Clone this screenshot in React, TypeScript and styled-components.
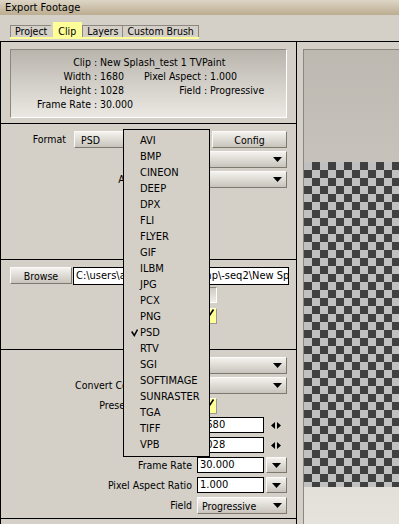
import React from "react";
import styled, { createGlobalStyle, css } from "styled-components";

const GlobalStyle = createGlobalStyle`
  *, *::before, *::after { box-sizing: border-box; }
  html, body { margin: 0; padding: 0; background: #d4d0c8; }
  body {
    font-family: "DejaVu Sans Condensed", "Liberation Sans", Arial, sans-serif;
    font-size: 10.5px;
    color: #000;
  }
`;

const Window = styled.div`
  position: relative;
  width: 399px;
  height: 524px;
  overflow: hidden;
  background: #d4d0c8;
  display: flex;
  flex-direction: column;
`;

const TitleBar = styled.div`
  flex: none;
  height: 15px;
  padding-left: 5px;
  font-size: 11px;
  line-height: 15px;
  background: linear-gradient(#ddd5c6, #bcad90);
`;

const TabStrip = styled.div`
  flex: none;
  height: 26px;
  display: flex;
  align-items: flex-end;
  padding: 0 0 2px 10px;
`;

const TabBar = styled.div`
  display: flex;
  align-items: flex-end;
  border-bottom: 2px solid #ffff99;
`;

const Tab = styled.div<{ $active?: boolean; $last?: boolean }>`
  height: 12px;
  padding: 0 4px;
  line-height: 11px;
  white-space: nowrap;
  border-top: 1px solid #8c8880;
  border-left: 1px solid #8c8880;
  ${(p) =>
    p.$last &&
    css`
      border-right: 1px solid #8c8880;
    `}
  ${(p) =>
    p.$active &&
    css`
      height: 15px;
      padding: 4px 6px 0 5px;
      margin-left: 2px;
      border: none;
      background: #ffff99;
    `}
`;

const Main = styled.div`
  flex: 1;
  min-height: 0;
  display: flex;
  border-top: 1px solid #000;
`;

const LeftColumn = styled.div`
  flex: none;
  width: 297px;
  border-left: 1px solid #000;
  border-right: 1px solid #000;
  display: flex;
  flex-direction: column;
`;

const Section = styled.div<{ $h?: number }>`
  flex: ${(p) => (p.$h ? "none" : "1")};
  ${(p) =>
    p.$h &&
    css`
      height: ${p.$h}px;
      border-bottom: 1px solid #000;
    `}
  padding: 7px 9px 0;
  display: flex;
  flex-direction: column;
  gap: 3px;
`;

const InfoPanel = styled.div`
  height: 69px;
  border: 1px solid;
  border-color: #8c8880 #ffffff #ffffff #8c8880;
  background: linear-gradient(#b9b5ad, #ebe8e3);
  padding-top: 5px;
  display: grid;
  grid-template-columns: 80px 9px 40px 61px 9px 1fr;
  grid-auto-rows: 14px;
  align-content: start;
  line-height: 14px;
  white-space: nowrap;
`;

const InfoKey = styled.span`
  text-align: right;
`;

const InfoSep = styled.span`
  text-align: center;
`;

const InfoValue = styled.span<{ $wide?: boolean }>`
  ${(p) =>
    p.$wide &&
    css`
      grid-column: span 4;
    `}
`;

const FlexRow = styled.div<{ $justify?: string }>`
  height: 17px;
  flex: none;
  display: flex;
  align-items: flex-start;
  justify-content: ${(p) => p.$justify || "flex-end"};
`;

const FormRow = styled.div`
  height: 17px;
  flex: none;
  display: grid;
  grid-template-columns: 182px 90px;
  column-gap: 5px;
  align-items: start;
`;

const Label = styled.span<{ $w?: number; $gap?: number }>`
  ${(p) =>
    p.$w &&
    css`
      width: ${p.$w}px;
    `}
  margin-right: ${(p) => p.$gap ?? 0}px;
  text-align: right;
  line-height: 17px;
  white-space: nowrap;
`;

const bevel = css`
  background: linear-gradient(#f4f2ee, #c8c4bc);
  border: 1px solid;
  border-color: #fbfaf8 #7d7971 #7d7971 #fbfaf8;
`;

const Button = styled.div<{ $w: number; $h?: number; $ml?: number }>`
  ${bevel};
  flex: none;
  width: ${(p) => p.$w}px;
  height: ${(p) => p.$h ?? 17}px;
  margin-left: ${(p) => p.$ml ?? 0}px;
  display: flex;
  align-items: center;
  justify-content: center;
  white-space: nowrap;
`;

const DropButton = styled.div<{ $w: number; $pad?: number }>`
  ${bevel};
  flex: none;
  width: ${(p) => p.$w}px;
  height: 17px;
  padding: 0 4px 0 ${(p) => p.$pad ?? 4}px;
  display: flex;
  align-items: center;
  justify-content: space-between;
  white-space: nowrap;
  overflow: hidden;
`;

const TextField = styled.div<{ $w?: number; $h?: number }>`
  flex: none;
  width: ${(p) => p.$w ?? 67}px;
  height: ${(p) => p.$h ?? 16}px;
  background: #fff;
  border: 1px solid #000;
  padding-left: 2px;
  font-size: 11px;
  line-height: ${(p) => (p.$h ?? 16) - 2}px;
  white-space: nowrap;
  overflow: hidden;
`;

const PathField = styled(TextField)`
  flex: 1;
  margin: 0 -2px 0 1px;
`;

const Controls = styled.div`
  display: flex;
  gap: 2px;
`;

const SpinSlot = styled.div`
  flex: none;
  width: 21px;
  height: 16px;
  display: flex;
  align-items: center;
  justify-content: center;
`;

const Checkbox = styled.div<{ $on?: boolean; $dy?: number }>`
  width: 16px;
  height: 16px;
  margin: ${(p) => p.$dy ?? 0}px 0 0 4px;
  border: 1px solid;
  border-color: #8c8880 #ffffff #ffffff #8c8880;
  background: linear-gradient(#cfcbc3, #efece7);
  ${(p) =>
    p.$on &&
    css`
      border-color: #fffff0 #9c988f #9c988f #fffff0;
      background: #ffff99;
    `}
  svg {
    display: block;
  }
`;

const RightColumn = styled.div`
  flex: 1;
  min-width: 0;
  display: flex;
  padding: 7px 0 0 6px;
`;

const Preview = styled.div`
  flex: 1;
  min-width: 0;
  overflow: hidden;
  border-top: 1px solid #8c8880;
  border-left: 1px solid #8c8880;
  background: linear-gradient(#bdb9b1, #e6e2dc);
  padding-top: 112px;
`;

const Checker = styled.div`
  height: 325px;
  background: repeating-conic-gradient(#404040 0 25%, #c0c0c0 0 50%) 0 0 / 16px 16px;
`;

const Menu = styled.ul`
  position: absolute;
  left: 123px;
  top: 129px;
  width: 87px;
  margin: 0;
  padding: 3px 0;
  list-style: none;
  background: #d4d0c8;
  border: 1px solid #000;
  font-size: 11px;
`;

const MenuItem = styled.li`
  position: relative;
  height: 16px;
  line-height: 16px;
  padding-left: 16px;
  white-space: nowrap;
`;

const MenuCheck = styled.svg`
  position: absolute;
  left: 7px;
  top: 4px;
`;

const formats = [
  "AVI", "BMP", "CINEON", "DEEP", "DPX", "FLI", "FLYER", "GIF", "ILBM", "JPG",
  "PCX", "PNG", "PSD", "RTV", "SGI", "SOFTIMAGE", "SUNRASTER", "TGA", "TIFF", "VPB",
];

const DownArrow = () => (
  <svg width="9" height="5" viewBox="0 0 9 5">
    <path d="M0 0H9L4.5 5Z" fill="#000" />
  </svg>
);

const SpinArrows = () => (
  <svg width="11" height="7" viewBox="0 0 11 7">
    <path d="M4 0V7L0 3.5Z M6 0V7L10 3.5Z" fill="#000" />
  </svg>
);

const Tick = () => (
  <svg width="14" height="14" viewBox="0 0 14 14">
    <path d="M4 3L7.5 6.5L11.5 0.5" fill="none" stroke="#000" strokeWidth="1.6" />
  </svg>
);

export default function App() {
  return (
    <>
      <GlobalStyle />
      <Window>
        <TitleBar>Export Footage</TitleBar>
        <TabStrip>
          <TabBar>
            <Tab>Project</Tab>
            <Tab $active>Clip</Tab>
            <Tab>Layers</Tab>
            <Tab $last>Custom Brush</Tab>
          </TabBar>
        </TabStrip>
        <Main>
          <LeftColumn>
            <Section $h={82}>
              <InfoPanel>
                <InfoKey>Clip</InfoKey>
                <InfoSep>:</InfoSep>
                <InfoValue $wide>New Splash_test 1 TVPaint</InfoValue>
                <InfoKey>Width</InfoKey>
                <InfoSep>:</InfoSep>
                <InfoValue>1680</InfoValue>
                <InfoKey>Pixel Aspect</InfoKey>
                <InfoSep>:</InfoSep>
                <InfoValue>1.000</InfoValue>
                <InfoKey>Height</InfoKey>
                <InfoSep>:</InfoSep>
                <InfoValue>1028</InfoValue>
                <InfoKey>Field</InfoKey>
                <InfoSep>:</InfoSep>
                <InfoValue>Progressive</InfoValue>
                <InfoKey>Frame Rate</InfoKey>
                <InfoSep>:</InfoSep>
                <InfoValue $wide>30.000</InfoValue>
              </InfoPanel>
            </Section>

            <Section $h={136}>
              <FlexRow $justify="flex-start">
                <Label $w={56} $gap={8}>Format</Label>
                <DropButton $w={133} $pad={6}>
                  PSD
                  <DownArrow />
                </DropButton>
                <Button $w={75} $ml={5}>Config</Button>
              </FlexRow>
              <FlexRow>
                <DropButton $w={135} $pad={5}>
                  <span />
                  <DownArrow />
                </DropButton>
              </FlexRow>
              <FlexRow>
                <Label $gap={7}>Alpha</Label>
                <DropButton $w={135} $pad={3}>
                  Premultiply.
                  <DownArrow />
                </DropButton>
              </FlexRow>
            </Section>

            <Section $h={90}>
              <FlexRow $justify="flex-start">
                <Button $w={62}>Browse</Button>
                <PathField $h={18}>
                  C:\users\admin\Desktop\tmp\-seq2\New Splash_test 1.psd
                </PathField>
              </FlexRow>
              <FormRow>
                <Label />
                <Checkbox />
              </FormRow>
              <FormRow>
                <Label />
                <Checkbox $on $dy={1}>
                  <Tick />
                </Checkbox>
              </FormRow>
            </Section>

            <Section $h={169}>
              <FlexRow>
                <DropButton $w={135} $pad={5}>
                  <span />
                  <DownArrow />
                </DropButton>
              </FlexRow>
              <FlexRow>
                <Label $gap={7}>Convert Colors</Label>
                <DropButton $w={135} $pad={5}>
                  <span />
                  <DownArrow />
                </DropButton>
              </FlexRow>
              <FormRow>
                <Label>Preserve Proportion</Label>
                <Checkbox $on $dy={1}>
                  <Tick />
                </Checkbox>
              </FormRow>
              <FormRow>
                <Label />
                <Controls>
                  <TextField>1680</TextField>
                  <SpinSlot>
                    <SpinArrows />
                  </SpinSlot>
                </Controls>
              </FormRow>
              <FormRow>
                <Label />
                <Controls>
                  <TextField>1028</TextField>
                  <SpinSlot>
                    <SpinArrows />
                  </SpinSlot>
                </Controls>
              </FormRow>
              <FormRow>
                <Label>Frame Rate</Label>
                <Controls>
                  <TextField>30.000</TextField>
                  <Button $w={21} $h={16}>
                    <DownArrow />
                  </Button>
                </Controls>
              </FormRow>
              <FormRow>
                <Label>Pixel Aspect Ratio</Label>
                <Controls>
                  <TextField>1.000</TextField>
                  <Button $w={21} $h={16}>
                    <DownArrow />
                  </Button>
                </Controls>
              </FormRow>
              <FormRow>
                <Label>Field</Label>
                <DropButton $w={90}>
                  Progressive
                  <DownArrow />
                </DropButton>
              </FormRow>
            </Section>

            <Section />
          </LeftColumn>

          <RightColumn>
            <Preview>
              <Checker />
            </Preview>
          </RightColumn>
        </Main>

        <Menu>
          {formats.map((f) => (
            <MenuItem key={f}>
              {f === "PSD" && (
                <MenuCheck width="7" height="8" viewBox="0 0 7 8">
                  <path d="M0.7 2.5L3.3 6.5L6.5 0.5" fill="none" stroke="#000" strokeWidth="1.5" />
                </MenuCheck>
              )}
              {f}
            </MenuItem>
          ))}
        </Menu>
      </Window>
    </>
  );
}
